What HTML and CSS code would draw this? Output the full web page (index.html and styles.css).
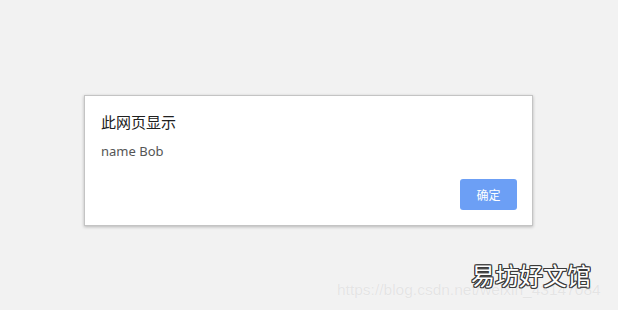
FILE: index.html
```html
<!DOCTYPE html>
<html lang="zh-CN">
<head>
<meta charset="utf-8">
<title>此网页显示</title>
<link rel="stylesheet" href="styles.css">
</head>
<body>
<div class="page">
  <div class="dialog">
    <div class="dialog-title">此网页显示</div>
    <div class="dialog-message">name Bob</div>
    <div class="dialog-actions">
      <button class="btn-ok">确定</button>
    </div>
  </div>
</div>
<div class="wm-url">https://blog.csdn.net/weixin_43147084</div>
<div class="wm-logo">易坊好文馆</div>
</body>
</html>
```

FILE: styles.css
```css
html, body {
  margin: 0;
  padding: 0;
  width: 618px;
  height: 310px;
  overflow: hidden;
  background: #f2f2f2;
  font-family: "Noto Sans", "Noto Sans CJK SC", sans-serif;
}
.page {
  padding: 95px 0 0 84px;
}
.dialog {
  box-sizing: border-box;
  width: 449px;
  height: 131px;
  background: #fff;
  border: 1px solid #c4c4c4;
  box-shadow: 0 1px 3px rgba(0, 0, 0, 0.25);
  padding: 16px 15px 15px 16px;
  display: flex;
  flex-direction: column;
}
.dialog-title {
  font-family: "Noto Sans CJK SC", sans-serif;
  font-size: 15px;
  line-height: 20px;
  color: #202020;
}
.dialog-message {
  margin-top: 10px;
  font-size: 13px;
  line-height: 18px;
  color: #555;
}
.dialog-actions {
  margin-top: 19px;
  display: flex;
  justify-content: flex-end;
}
.btn-ok {
  width: 57px;
  height: 31px;
  border: none;
  border-radius: 3px;
  background: #6c9ff5;
  color: #fff;
  font-family: "Noto Sans CJK SC", sans-serif;
  font-size: 12px;
  padding: 0;
}
.wm-url {
  position: absolute;
  left: 337px;
  top: 280px;
  font-family: "Liberation Sans", sans-serif;
  font-size: 15.5px;
  line-height: 20px;
  color: #e4e4e4;
  text-shadow: 0 0 1px #fff;
  white-space: nowrap;
}
.wm-logo {
  position: absolute;
  left: 471px;
  top: 260px;
  font-family: "Noto Sans CJK SC", sans-serif;
  font-size: 24px;
  line-height: 30px;
  color: #fff;
  text-shadow: -1px -1px 0 #3a3a3a, 1px -1px 0 #3a3a3a, -1px 1px 0 #3a3a3a, 1px 1px 0 #3a3a3a, 0 1px 0 #3a3a3a, 0 -1px 0 #3a3a3a, 1px 0 0 #3a3a3a, -1px 0 0 #3a3a3a;
  white-space: nowrap;
}
```
